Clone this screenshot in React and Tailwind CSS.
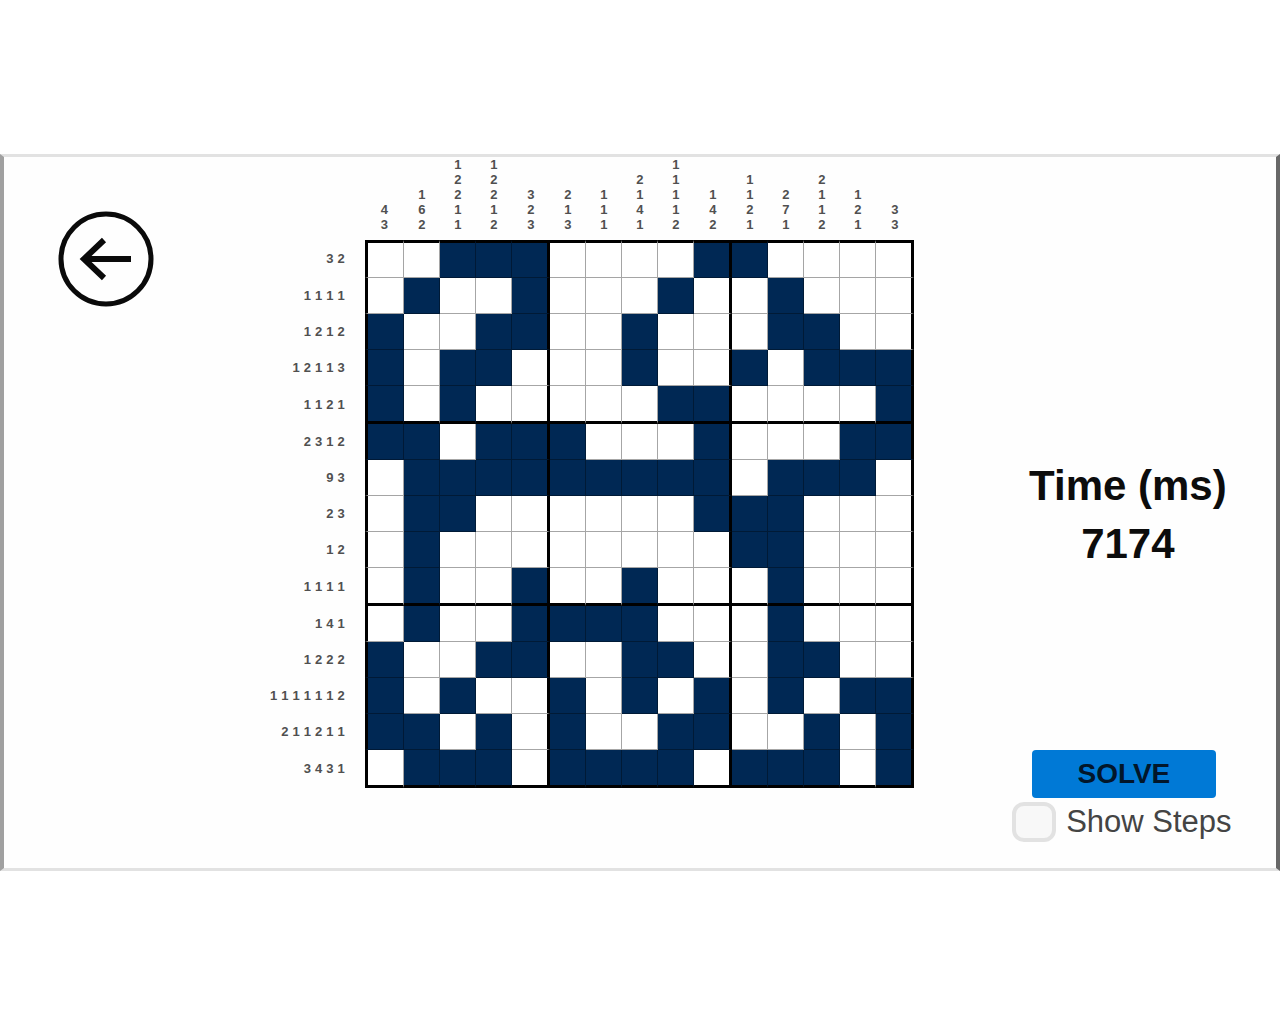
import { useState } from "react";

const PUZZLE = [
  "001110000110000",
  "010010001001000",
  "100110010001100",
  "101100010010111",
  "101000001100001",
  "110111000100011",
  "011111111101110",
  "011000000111000",
  "010000000011000",
  "010010010001000",
  "010011110001000",
  "100110011001100",
  "101001010101011",
  "110101001100101",
  "011101111011101",
];

const COLUMNS = PUZZLE.map((_, c) => PUZZLE.map((row) => row[c]).join(""));

function runs(line) {
  return (line.match(/1+/g) || []).map((run) => run.length);
}

function columnClass(c) {
  if (c === 0) return "w-[39px] min-w-[39px] border-l-3 border-l-black border-r border-r-black/35";
  if (c % 5 === 4) return "w-[38px] min-w-[38px] border-r-3 border-r-black";
  return "w-9 min-w-9 border-r border-r-black/35";
}

function rowClass(r) {
  if (r === 0) return "h-[38px] border-t-3 border-t-black border-b border-b-black/35";
  if (r % 5 === 4) return "h-[38px] border-b-3 border-b-black";
  return "h-9 border-b border-b-black/35";
}

function Board() {
  return (
    <table className="border-separate border-spacing-0 text-[13px] leading-[15px] text-[#505050]" aria-label="Nonogram">
      <thead>
        <tr>
          <td className="p-0" />
          {COLUMNS.map((column, c) => (
            <th key={c} scope="col" className="h-[82px] p-0 pb-2 align-bottom font-bold">
              <div className="flex flex-col items-center">
                {runs(column).map((n, i) => (
                  <span key={i}>{n}</span>
                ))}
              </div>
            </th>
          ))}
        </tr>
      </thead>
      <tbody>
        {PUZZLE.map((row, r) => (
          <tr key={r}>
            <th scope="row" className="w-[102px] min-w-[102px] p-0 pr-5 font-bold">
              <div className="flex justify-end gap-1">
                {runs(row).map((n, i) => (
                  <span key={i}>{n}</span>
                ))}
              </div>
            </th>
            {[...row].map((cell, c) => (
              <td
                key={c}
                className={`p-0 ${cell === "1" ? "bg-[#002854]" : "bg-white"} ${columnClass(c)} ${rowClass(r)}`}
              />
            ))}
          </tr>
        ))}
      </tbody>
    </table>
  );
}

export default function App() {
  const [showSteps, setShowSteps] = useState(false);
  return (
    <div className="flex min-h-screen items-center bg-white font-['Liberation_Sans',sans-serif] text-black">
      <main className="grid w-full grid-cols-[5fr_auto_7fr] border-x-4 border-y-3 border-x-[#a0a0a0] border-y-[#e2e2e2] border-r-[#686868] bg-[#fefefe]">
        <div className="pt-[54px] pl-[54px]">
          <button type="button" aria-label="Back" className="block rounded-full">
            <svg viewBox="0 0 96 96" className="size-24" fill="none" stroke="#0a0a0a" strokeWidth="5">
              <circle cx="48" cy="48" r="45" />
              <path d="M73 48H26M46 29L26 48L46 67" strokeWidth="6" />
            </svg>
          </button>
        </div>
        <div className="pb-20">
          <Board />
        </div>
        <aside className="flex flex-col items-center justify-between pt-[300px] pb-[26px] pl-[58px]">
          <div className="pl-2 text-center text-[42px] leading-[58px] font-bold whitespace-nowrap text-[#0c0c0c]">
            <h1>Time (ms)</h1>
            <output className="block">7174</output>
          </div>
          <div className="flex flex-col items-center">
            <button type="button" className="h-12 w-46 rounded-sm bg-[#0079d6] text-[28px] leading-8 font-bold text-[#02162a]">
              SOLVE
            </button>
            <label className="mt-1 flex items-center gap-2.5 pr-1 text-[31px] leading-10 whitespace-nowrap text-[#444]">
              <input
                type="checkbox"
                checked={showSteps}
                onChange={(e) => setShowSteps(e.target.checked)}
                className="h-10 w-11 appearance-none rounded-xl border-4 border-[#e2e2e2] bg-[#f8f8f8] checked:bg-[#0079d6]"
              />
              Show Steps
            </label>
          </div>
        </aside>
      </main>
    </div>
  );
}
